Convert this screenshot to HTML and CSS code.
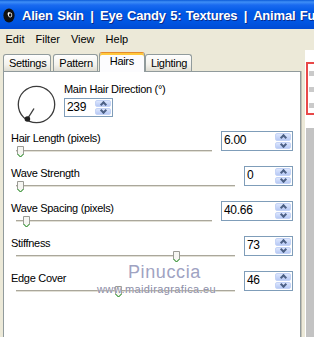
FILE: index.html
```html
<!DOCTYPE html>
<html>

<head>
    <title>Eye Candy 5: Textures - Animal Fur</title>
    <link rel="stylesheet" href="styles.css">
</head>

<body>
    <div class="window">
        <div class="titlebar">
            <svg class="app-icon" width="12" height="15" viewBox="0 0 12 15">
                <ellipse cx="6" cy="7.5" rx="5.6" ry="7" fill="#111"/>
                <path d="M5 4.5 C7 3.8 9.5 5 9.2 7.5 C8.8 9.5 7 10 6 9 C5 8 4 5.5 5 4.5 Z" fill="#fff"/>
                <ellipse cx="7.2" cy="7" rx="1.3" ry="1.7" fill="#111"/>
            </svg>
            <span class="title">Alien Skin <span class="sep">|</span> Eye Candy 5: Textures <span class="sep">|</span> Animal Fur</span>
        </div>

        <div class="menubar">
            <span class="menu-item">Edit</span>
            <span class="menu-item">Filter</span>
            <span class="menu-item">View</span>
            <span class="menu-item">Help</span>
        </div>

        <div class="workarea">
            <div class="dialog">
                <div class="tabs">
                    <div class="tab">Settings</div>
                    <div class="tab">Pattern</div>
                    <div class="tab active">Hairs</div>
                    <div class="tab">Lighting</div>
                </div>

                <div class="panel">
                    <!-- direction dial -->
                    <div class="direction">
                        <svg class="dial" width="39" height="39" viewBox="0 0 39 39">
                            <circle cx="19.5" cy="19.5" r="18.2" fill="none" stroke="#3c3c3c" stroke-width="1.3"/>
                            <line x1="17" y1="23.5" x2="10.4" y2="34" stroke="#3c3c3c" stroke-width="1.4"/>
                            <circle cx="10.4" cy="34" r="2.8" fill="#222"/>
                        </svg>
                        <div class="direction-field">
                            <div class="label">Main Hair Direction (°)</div>
                            <div class="spin narrow short">
                                <span class="value">239</span>
                                <span class="arrows"><span class="arrow up"></span><span class="arrow down"></span></span>
                            </div>
                        </div>
                    </div>

                    <div class="row">
                        <div class="control">
                            <div class="label">Hair Length (pixels)</div>
                            <div class="slider">
                                <div class="track"></div>
                                <svg class="thumb" style="left: 1px" width="7" height="12" viewBox="0 0 7 12"><path d="M0.5 0.5 H6.5 V8 L3.5 11 L0.5 8 Z" fill="#f6f6f2" stroke="#9a9a94"/><path d="M0.5 8 L3.5 11 L6.5 8" fill="none" stroke="#2aa02a"/></svg>
                            </div>
                        </div>
                        <div class="spin wide">
                            <span class="value">6.00</span>
                            <span class="arrows"><span class="arrow up"></span><span class="arrow down"></span></span>
                        </div>
                    </div>

                    <div class="row">
                        <div class="control">
                            <div class="label">Wave Strength</div>
                            <div class="slider">
                                <div class="track"></div>
                                <svg class="thumb" style="left: 1px" width="7" height="12" viewBox="0 0 7 12"><path d="M0.5 0.5 H6.5 V8 L3.5 11 L0.5 8 Z" fill="#f6f6f2" stroke="#9a9a94"/><path d="M0.5 8 L3.5 11 L6.5 8" fill="none" stroke="#2aa02a"/></svg>
                            </div>
                        </div>
                        <div class="spin narrow">
                            <span class="value">0</span>
                            <span class="arrows"><span class="arrow up"></span><span class="arrow down"></span></span>
                        </div>
                    </div>

                    <div class="row">
                        <div class="control">
                            <div class="label">Wave Spacing (pixels)</div>
                            <div class="slider">
                                <div class="track"></div>
                                <svg class="thumb" style="left: 7px" width="7" height="12" viewBox="0 0 7 12"><path d="M0.5 0.5 H6.5 V8 L3.5 11 L0.5 8 Z" fill="#f6f6f2" stroke="#9a9a94"/><path d="M0.5 8 L3.5 11 L6.5 8" fill="none" stroke="#2aa02a"/></svg>
                            </div>
                        </div>
                        <div class="spin wide">
                            <span class="value">40.66</span>
                            <span class="arrows"><span class="arrow up"></span><span class="arrow down"></span></span>
                        </div>
                    </div>

                    <div class="row">
                        <div class="control">
                            <div class="label">Stiffness</div>
                            <div class="slider">
                                <div class="track"></div>
                                <svg class="thumb" style="left: 157px" width="7" height="12" viewBox="0 0 7 12"><path d="M0.5 0.5 H6.5 V8 L3.5 11 L0.5 8 Z" fill="#f6f6f2" stroke="#9a9a94"/><path d="M0.5 8 L3.5 11 L6.5 8" fill="none" stroke="#2aa02a"/></svg>
                            </div>
                        </div>
                        <div class="spin narrow">
                            <span class="value">73</span>
                            <span class="arrows"><span class="arrow up"></span><span class="arrow down"></span></span>
                        </div>
                    </div>

                    <div class="row">
                        <div class="control">
                            <div class="label">Edge Cover</div>
                            <div class="slider">
                                <div class="track"></div>
                                <svg class="thumb" style="left: 99px" width="7" height="12" viewBox="0 0 7 12"><path d="M0.5 0.5 H6.5 V8 L3.5 11 L0.5 8 Z" fill="#f6f6f2" stroke="#9a9a94"/><path d="M0.5 8 L3.5 11 L6.5 8" fill="none" stroke="#2aa02a"/></svg>
                            </div>
                        </div>
                        <div class="spin narrow">
                            <span class="value">46</span>
                            <span class="arrows"><span class="arrow up"></span><span class="arrow down"></span></span>
                        </div>
                    </div>

                    <div class="watermark">
                        <div class="wm-name">Pinuccia</div>
                        <div class="wm-url">www.maidiragrafica.eu</div>
                    </div>
                </div>
            </div>

            <div class="preview">
                <div class="preview-frame">
                    <div class="stripe"></div>
                    <div class="stripe"></div>
                    <div class="stripe"></div>
                </div>
                <div class="preview-list"></div>
            </div>
        </div>
    </div>
</body>

</html>
```

FILE: styles.css
```css
body {
    margin: 0;
    padding: 0;
    font-family: "Liberation Sans", Arial, sans-serif;
    font-size: 11px;
    color: #000;
    background-color: #ece9d8;
}

.window {
    width: 314px;
    height: 337px;
    overflow: hidden;
    display: flex;
    flex-direction: column;
}

/* title bar */
.titlebar {
    height: 29px;
    flex: none;
    display: flex;
    align-items: center;
    padding: 1px 0 0 3px;
    box-sizing: border-box;
    white-space: nowrap;
    overflow: hidden;
    background: linear-gradient(to bottom, #0b5ad8 0, #3f8ff7 2px, #1a6af0 5px, #0059e6 12px, #0055e2 22px, #004bd4 29px);
}

.app-icon {
    flex: none;
    margin-right: 7px;
}

.title {
    color: #fff;
    font-weight: bold;
    font-size: 13px;
    letter-spacing: -0.2px;
    word-spacing: 1px;
    text-shadow: 1px 1px 0 #0a2a8a;
}

.title .sep {
    margin: 0 2px;
}

/* menu */
.menubar {
    height: 19px;
    flex: none;
    display: flex;
    align-items: center;
    background-color: #ece9d8;
}

.menu-item {
    padding: 0 5.5px;
}

/* dialog + preview */
.workarea {
    flex: 1;
    display: flex;
    min-height: 0;
}

.dialog {
    width: 305px;
    flex: none;
    display: flex;
    flex-direction: column;
    padding: 4px 4px 0 3px;
    box-sizing: border-box;
}

.tabs {
    display: flex;
    align-items: flex-end;
    height: 19px;
    flex: none;
}

.tab {
    height: 17px;
    line-height: 16px;
    padding: 0 4px 0 5px;
    letter-spacing: -0.3px;
    border: 1px solid #919b9c;
    border-bottom: 0;
    border-radius: 3px 3px 0 0;
    box-sizing: border-box;
    background: linear-gradient(to bottom, #fefefe, #f3f2ec 60%, #dedcd2);
    margin-right: 2px;
}

.tab.active {
    position: relative;
    z-index: 1;
    height: 20px;
    margin: 0 0 -1px -1px;
    padding: 0 10px 3px 10px;
    line-height: 16px;
    background: #fcfcfe;
    border-top: 1px solid #e68b2c;
    box-shadow: inset 0 2px 0 #ffc83c;
}

.panel {
    position: relative;
    flex: 1;
    background-color: #fff;
    border: 1px solid #919b9c;
    border-bottom: 0;
    box-shadow: 1px 0 0 #c4c1b4;
    padding: 10px 7px 0 7px;
}

.label {
    height: 14px;
    line-height: 14px;
    letter-spacing: -0.3px;
    white-space: nowrap;
}

/* direction */
.direction {
    display: flex;
    height: 48px;
}

.dial {
    margin: 3px 8px 0 6px;
}

.direction-field {
    display: flex;
    flex-direction: column;
}

.direction-field .spin {
    margin-top: 2px;
}

/* slider rows */
.row {
    display: flex;
    gap: 9px;
    height: 35px;
    align-items: flex-start;
}

.control {
    flex: 1;
    padding-top: 1px;
}

.slider {
    position: relative;
    height: 14px;
    margin-left: 5px;
}

.track {
    position: absolute;
    left: 0;
    right: 0;
    top: 5px;
    height: 1px;
    background-color: #aaa79b;
    border-bottom: 1px solid #e2e0d6;
}

.thumb {
    position: absolute;
    top: 1px;
}

/* spin boxes */
.spin {
    display: flex;
    height: 20px;
    border: 1px solid #7f9db9;
    box-sizing: border-box;
    background-color: #fff;
    margin-top: 1px;
}

.spin.short {
    height: 19px;
}

.spin.wide {
    width: 72px;
}

.spin.narrow {
    width: 49px;
}

.spin .value {
    flex: 1;
    padding-left: 2px;
    font-size: 12px;
    letter-spacing: -0.3px;
    line-height: 17px;
}

.arrows {
    width: 16px;
    display: flex;
    flex-direction: column;
    padding: 1px 1px 1px 0;
    gap: 1px;
}

.arrow {
    flex: 1;
    display: flex;
    align-items: center;
    justify-content: center;
    border-radius: 2px;
    background: linear-gradient(to bottom, #dce6fd, #b7c9f5);
    border: 1px solid #c4d3f6;
}

.arrow::before {
    content: "";
    width: 3px;
    height: 3px;
    border-left: 2px solid #4d6185;
    border-top: 2px solid #4d6185;
}

.arrow.up::before {
    transform: translateY(1px) rotate(45deg);
}

.arrow.down::before {
    transform: translateY(-1px) rotate(225deg);
}

/* watermark over the sliders */
.watermark {
    position: absolute;
    left: 93px;
    top: 191px;
    pointer-events: none;
}

.wm-name {
    padding-left: 31px;
    font-size: 18px;
    line-height: 18px;
    letter-spacing: 0.6px;
    color: #9fa3c2;
}

.wm-url {
    margin-top: 2px;
    font-size: 11px;
    line-height: 12px;
    letter-spacing: 0.4px;
    color: #8b8da6;
    text-shadow: 0 0 1px #fff;
}

/* preview strip on the right */
.preview {
    flex: 1;
    margin-top: 2px;
    background-color: #fff;
    display: flex;
    flex-direction: column;
}

.preview-frame {
    height: 53px;
    flex: none;
    margin: 12px 0 0 1px;
    padding-top: 7px;
    border: 2px solid #e84848;
    border-right: 0;
    box-sizing: border-box;
}

.stripe {
    height: 5px;
    margin: 0 0 11px 1px;
    background-color: #cacaca;
}

.preview-list {
    flex: 1;
    margin: 13px 0 0 1px;
    background-color: #c3c3c3;
}
```
